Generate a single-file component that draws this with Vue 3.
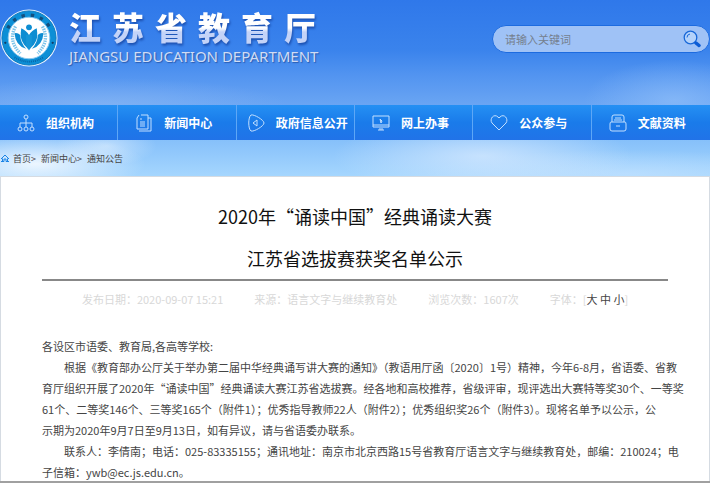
<template>
  <div class="page">
    <header class="banner">
      <a class="brand" href="#">
        <svg class="emblem" viewBox="0 0 60 60" aria-hidden="true">
          <circle cx="30" cy="30" r="29.5" fill="#e6f1fc" />
          <circle cx="30" cy="30" r="28" fill="#0c8fd6" stroke="#0b78bd" />
          <circle cx="30" cy="30" r="21.5" fill="#fff" stroke="#8cc9ee" />
          <path d="M8 20 A24.500 24.500 0 0 1 52 20" fill="none" stroke="#14507f" stroke-width="3.500" stroke-dasharray="3.500 6.200" />
          <circle cx="5.500" cy="35" r="1.200" fill="#123c66" />
          <circle cx="54.500" cy="35" r="1.200" fill="#123c66" />
          <path d="M15 50 Q30 59 45 50" fill="none" stroke="#0a66a8" stroke-width="2" stroke-dasharray="1 1" />
          <path d="M16 18 Q8 33 21 46 M44 18 Q52 33 39 46" fill="none" stroke="#7cc4ea" stroke-width="3.500" stroke-dasharray="1.500 1" />
          <circle cx="30" cy="19" r="3" fill="#0d8dd2" />
          <path d="M30 27 Q27 22 22 20 Q20 31 25 37 L29 41 V27 Z M30 27 Q33 22 38 20 Q40 31 35 37 L31 41 V27 Z" fill="#0d8dd2" />
          <path d="M21 27 Q18 24 15 25 Q16 38 27 41 Q21 35 21 27 Z M39 27 Q42 24 45 25 Q44 38 33 41 Q39 35 39 27 Z" fill="#0d8dd2" />
          <path d="M27 38 L30 43 L33 38 V27 H27 Z" fill="#1595d6" />
        </svg>
        <span class="names">
          <span class="name-cn"><span v-for="c in siteName" :key="c">{{ c }}</span></span>
          <span class="name-en">JIANGSU EDUCATION DEPARTMENT</span>
        </span>
      </a>
      <form class="search" @submit.prevent>
        <input v-model="keyword" type="text" placeholder="请输入关键词" aria-label="请输入关键词">
        <button type="submit" aria-label="搜索">
          <svg viewBox="0 0 18 18">
            <circle cx="7.500" cy="7.500" r="6.300" fill="#b4d2fa" stroke="#1767d8" stroke-width="1.300" />
            <path d="M4 7.500 A3.500 3.500 0 0 1 7 4" fill="none" stroke="#1767d8" />
            <path d="M13 13 L16 15.500" stroke="#0b5cd6" stroke-width="3.500" stroke-linecap="round" />
          </svg>
        </button>
      </form>
    </header>

    <nav class="menu">
      <a
        v-for="item in menu"
        :key="item.text"
        href="#"
        :class="{ long: item.text.length > 4 }"
      >
        <svg viewBox="0 0 18 18"><path :d="item.icon" /></svg>
        <span>{{ item.text }}</span>
      </a>
    </nav>

    <div class="crumbs">
      <svg viewBox="0 0 10 10">
        <path d="M1 6 L5 2 L9 6 M1 8.500 H4 V6 H6 V8.500 H9 M2.500 5.500 V8.500 M7.500 5.500 V8.500" />
      </svg>
      <span><a href="#">首页</a>&gt;</span>
      <span><a href="#">新闻中心</a>&gt;</span>
      <a href="#">通知公告</a>
    </div>

    <main class="article">
      <h1>2020年“诵读中国”经典诵读大赛<br>江苏省选拔赛获奖名单公示</h1>
      <div class="meta">
        <span>发布日期：2020-09-07 15:21</span>
        <span>来源：语言文字与继续教育处</span>
        <span>浏览次数：1607次</span>
        <span>字体：[<button type="button">大</button> <button type="button">中</button> <button type="button">小</button>]</span>
      </div>
      <div class="content">
        <p>各设区市语委、教育局,各高等学校:</p>
        <p class="indent">
          根据《教育部办公厅关于举办第二届中华经典诵写讲大赛的通知》（教语用厅函〔2020〕1号）精神，今年6-8月，省语委、省教<br>育厅组织开展了2020年“诵读中国”经典诵读大赛江苏省选拔赛。经各地和高校推荐，省级评审，现评选出大赛特等奖30个、一等奖<br>61个、二等奖146个、三等奖165个（附件1）；优秀指导教师22人（附件2）；优秀组织奖26个（附件3）。现将名单予以公示，公<br>示期为2020年9月7日至9月13日，如有异议，请与省语委办联系。
        </p>
        <p class="indent">
          联系人：李倩南；电话：025-83335155；通讯地址：南京市北京西路15号省教育厅语言文字与继续教育处，邮编：210024；电<br>子信箱：ywb@ec.js.edu.cn。
        </p>
      </div>
    </main>
    <div class="bottom-line" />
  </div>
</template>

<script setup>
import { ref } from 'vue';

const siteName = '江苏省教育厅';
const keyword = ref('');

const menu = [
  { text: '组织机构', icon: 'M9 1 a2 2 0 1 1 0 4 a2 2 0 1 1 0 -4 M9 5 V13 M3 13 V9 H15 V13 M3 13 a2 2 0 1 1 0 4 a2 2 0 1 1 0 -4 M9 13 a2 2 0 1 1 0 4 a2 2 0 1 1 0 -4 M15 13 a2 2 0 1 1 0 4 a2 2 0 1 1 0 -4' },
  { text: '新闻中心', icon: 'M6 1 H13 V15 H2 V4 M2 4 L4 1 M13 4 H16 V17 H4 M5 5 H7 M5 8 H10 M5 10 H10 M5 12 H10' },
  { text: '政府信息公开', icon: 'M4 1 C7 0 17 6 17 9 C17 12 7 18 4 17 C1 15 1 3 4 1 Z M10 6 V12 L6 9 Z' },
  { text: '网上办事', icon: 'M1 2 H17 V13 H1 Z M1 11 H17 M6 16 H12 M8 14 V16 M10 14 V16 M8 5 L9 9 L10 7 Z' },
  { text: '公众参与', icon: 'M9 16 L2 9 C-1 5 4 -1 8 3 L9 4 L10 3 C14 -1 19 5 16 9 Z' },
  { text: '文献资料', icon: 'M3 8 V3 Q3 1 5 1 H13 Q15 1 15 3 V8 M6 4 H12 M5 6 H13 M2 8 H16 Q17 8 17 10 V15 Q17 17 15 17 H3 Q1 17 1 15 V10 Q1 8 2 8 M7 12 H11' }
];
</script>

<style>
body {
  margin: 0;
}
</style>

<style scoped>
* {box-sizing: border-box}

.page {
  font-family: "Noto Sans CJK SC", "Noto Sans", sans-serif;
  font-size: 11px;
  background:
    radial-gradient(ellipse 110px 30px at 5% 164px, rgba(245,250,255,.9), transparent),
    radial-gradient(ellipse 50px 20px at 15% 146px, rgba(225,240,255,.6), transparent),
    radial-gradient(ellipse 90px 40px at 95% 100px, rgba(150,195,250,.6), transparent),
    radial-gradient(ellipse 150px 36px at 68% 156px, rgba(220,236,255,.7), transparent),
    radial-gradient(ellipse 200px 24px at 88% 174px, rgba(200,228,255,.6), transparent),
    radial-gradient(ellipse 180px 26px at 15% 104px, rgba(140,185,245,.6), transparent),
    linear-gradient(#2f78ea, #3a83ec 50px, #5294f0 75px, #6aa5f3 105px, #86c0fa 140px, #a5d6fe 176px);
}

a {
  color: inherit;
  text-decoration: none;
}

/* Banner */
.banner {
  display: flex;
  justify-content: space-between;
  align-items: flex-start;
  height: 105px;
}

.brand {
  display: flex;
  gap: 11px;
  padding-top: 8px;
}

.emblem {
  width: 58px;
  height: 60px;
}

.names {
  display: flex;
  flex-direction: column;
}

.name-cn {
  display: flex;
  gap: 11px;
  font-size: 32px;
  line-height: 36px;
  font-weight: 900;
  color: transparent;
  background: linear-gradient(#fff 20px, #c3d3f8 24px);
  background-clip: text;
  filter: drop-shadow(1px 2px 1px #1c50b0);
}

.name-en {
  font-family: "Noto Sans", sans-serif;
  font-size: 15px;
  line-height: 24px;
  color: #d0dcf4;
  text-shadow: 1px 1px 1px #2a5cb0;
}

.search {
  display: flex;
  align-items: center;
  width: 218px;
  height: 28px;
  margin-top: 25px;
  padding: 0 8px 0 12px;
  background: #9fc2f6;
  border: 1px solid #1c6be0;
  border-radius: 14px;
}

.search input {
  flex: 1;
  min-width: 0;
  padding: 0;
  border: 0;
  outline: 0;
  background: none;
  font: inherit;
  color: #555;
}

.search input::placeholder {
  color: #757f8e;
}

.search button {
  width: 18px;
  height: 18px;
  padding: 0;
  border: 0;
  background: none;
  cursor: pointer;
}

.search svg {
  display: block;
}

/* Main menu */
.menu {
  display: grid;
  grid-template-columns: repeat(6, 1fr);
  height: 35px;
  background: linear-gradient(#2590f3, #1a7bea 50%, #2173e8);
}

.menu a {
  display: flex;
  align-items: center;
  gap: 11px;
  padding-left: 17px;
  border-right: 1px solid #5ea7f6;
  color: #fff;
  font-size: 12px;
  font-weight: bold;
  white-space: nowrap;
}

.menu a.long {
  padding-left: 10px;
}

.menu a:last-child {
  border-right: 0;
}

.menu svg {
  width: 18px;
  height: 18px;
  fill: none;
  stroke: #c4e0ff;
}

/* Breadcrumb */
.crumbs {
  display: flex;
  align-items: center;
  gap: 3px;
  height: 36px;
  font-size: 9px;
  color: #444;
}

.crumbs span {
  padding-right: 2px;
}

.crumbs svg {
  width: 10px;
  height: 10px;
  fill: none;
  stroke: #1b84e6;
}

/* Article */
.article {
  padding: 18px 41px 0;
  background: #fff;
  border: 1px solid #d5dbe2;
  border-bottom: 0;
}

h1 {
  margin: 0;
  border-bottom: 2px solid #888;
  font-size: 18px;
  line-height: 42px;
  font-weight: normal;
  text-align: center;
  color: #111;
}

.meta {
  display: flex;
  justify-content: center;
  gap: 31px;
  line-height: 36px;
  color: #d8d8d8;
  white-space: nowrap;
}

.meta button {
  padding: 0;
  border: 0;
  background: none;
  font: inherit;
  color: #444;
  cursor: pointer;
}

.content {
  padding-top: 19px;
  line-height: 21px;
  color: #444;
  white-space: nowrap;
}

.content p {
  margin: 0;
}

.content .indent {
  text-indent: 2em;
}

/* Grey edge under the article */
.bottom-line {
  height: 2px;
  margin-top: -2px;
  background: #a0a0a0;
}
</style>
